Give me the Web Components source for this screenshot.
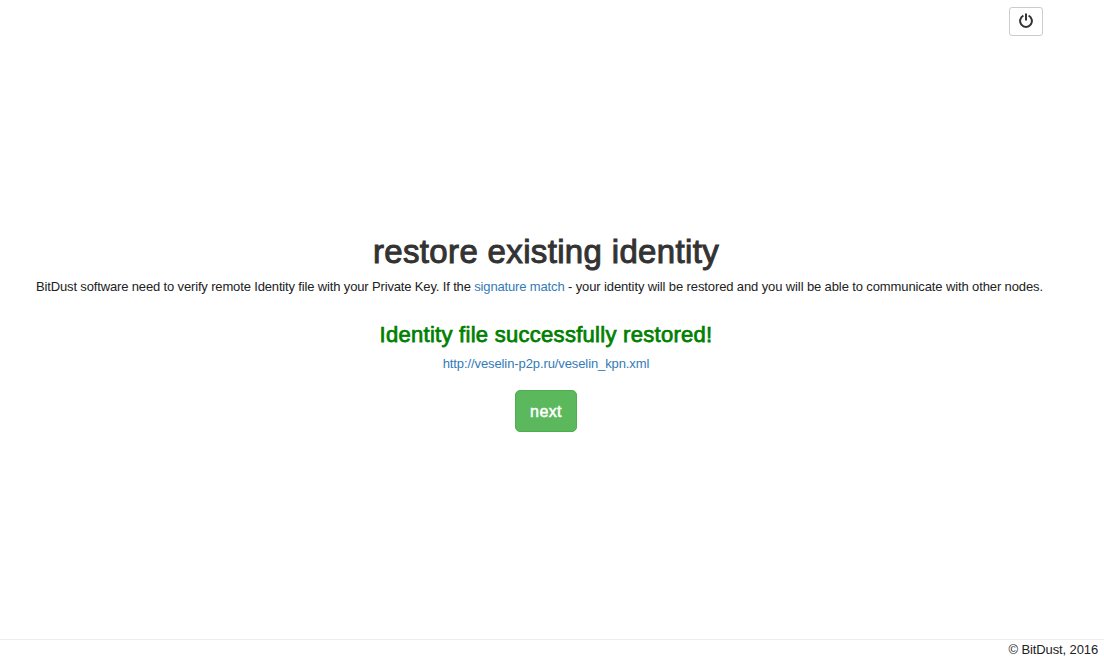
<!DOCTYPE html>
<html lang="en">
<head>
<meta charset="utf-8">
<title>BitDust</title>
<style>
html,body{margin:0;height:100%;background:#fff;overflow:hidden}
body{font-family:"Liberation Sans",Arial,sans-serif;font-size:13px;color:#222}
</style>
</head>
<body>
<bd-app></bd-app>
<script>
class BdElement extends HTMLElement {
  constructor() {
    super();
    this.attachShadow({mode: 'open'}).innerHTML = this.constructor.markup;
  }
}

customElements.define('bd-power-button', class extends BdElement {
  static markup = `<style>
    :host{display:block}
    button{box-sizing:border-box;display:flex;align-items:flex-start;justify-content:flex-start;width:34px;height:29px;padding:5px 0 0 9px;border:1px solid #ccc;border-radius:3px;background:#fff;color:#333}
    svg{display:block}
  </style>
  <button aria-label="Power"><svg width="14" height="15" viewBox="0 0 14 15" fill="none" stroke="currentColor" stroke-width="2"><path d="M4.4 2.7A5.9 5.9 0 1 0 9.6 2.7M7 .4V7.6"/></svg></button>`;
});

customElements.define('bd-link', class extends BdElement {
  static markup = `<style>:host{display:inline}a{color:#337ab7;text-decoration:none}</style><a href="#"><slot></slot></a>`;
});

customElements.define('bd-button', class extends BdElement {
  static markup = `<style>
    :host{display:block}
    button{box-sizing:border-box;width:62px;height:42px;padding:2px 0 0;border:1px solid #4cae4c;border-radius:5px;background:#5cb85c;color:#fff;font:16px "Liberation Sans",Arial,sans-serif;letter-spacing:.4px;-webkit-text-stroke:.5px}
  </style><button><slot></slot></button>`;
});

customElements.define('bd-footer', class extends BdElement {
  static markup = `<style>:host{display:block;box-sizing:border-box;height:18px;border-top:1px solid #eee;padding-right:6px;text-align:right;line-height:20px;letter-spacing:-.12px}</style><slot></slot>`;
});

customElements.define('bd-restore', class extends BdElement {
  static markup = `<style>
    :host{display:flex;flex-direction:column;align-items:center;white-space:nowrap}
    h1{margin:0;font-size:33px;line-height:36px;font-weight:400;letter-spacing:.34px;color:#333;-webkit-text-stroke:1px}
    p{margin:0;line-height:18px}
    h2{margin:26px 0 0;font-size:22px;line-height:26px;font-weight:400;letter-spacing:.28px;color:#008000;-webkit-text-stroke:.75px}
    .intro{margin:8px 13px 0 0;letter-spacing:-.15px}
    .intro span{letter-spacing:-.115px}
    .url{margin-top:7px;letter-spacing:-.1px}
    bd-button{margin-top:17px}
  </style>
  <h1>restore existing identity</h1>
  <p class="intro">BitDust software need to verify remote Identity file with your Private Key. If the <bd-link>signature match</bd-link><span> - your identity will be restored and you will be able to communicate with other nodes.</span></p>
  <h2>Identity file successfully restored!</h2>
  <p class="url"><bd-link>http://veselin-p2p.ru/veselin_kpn.xml</bd-link></p>
  <bd-button>next</bd-button>`;
});

customElements.define('bd-app', class extends BdElement {
  static markup = `<style>
    :host{display:flex;flex-direction:column;height:657px}
    header{display:flex;justify-content:flex-end;padding:7px 61px 0 0;height:227px}
    main{flex:1;padding-right:12px}
  </style>
  <header><bd-power-button></bd-power-button></header>
  <main><bd-restore></bd-restore></main>
  <bd-footer>© BitDust, 2016</bd-footer>`;
});
</script>
</body>
</html>
